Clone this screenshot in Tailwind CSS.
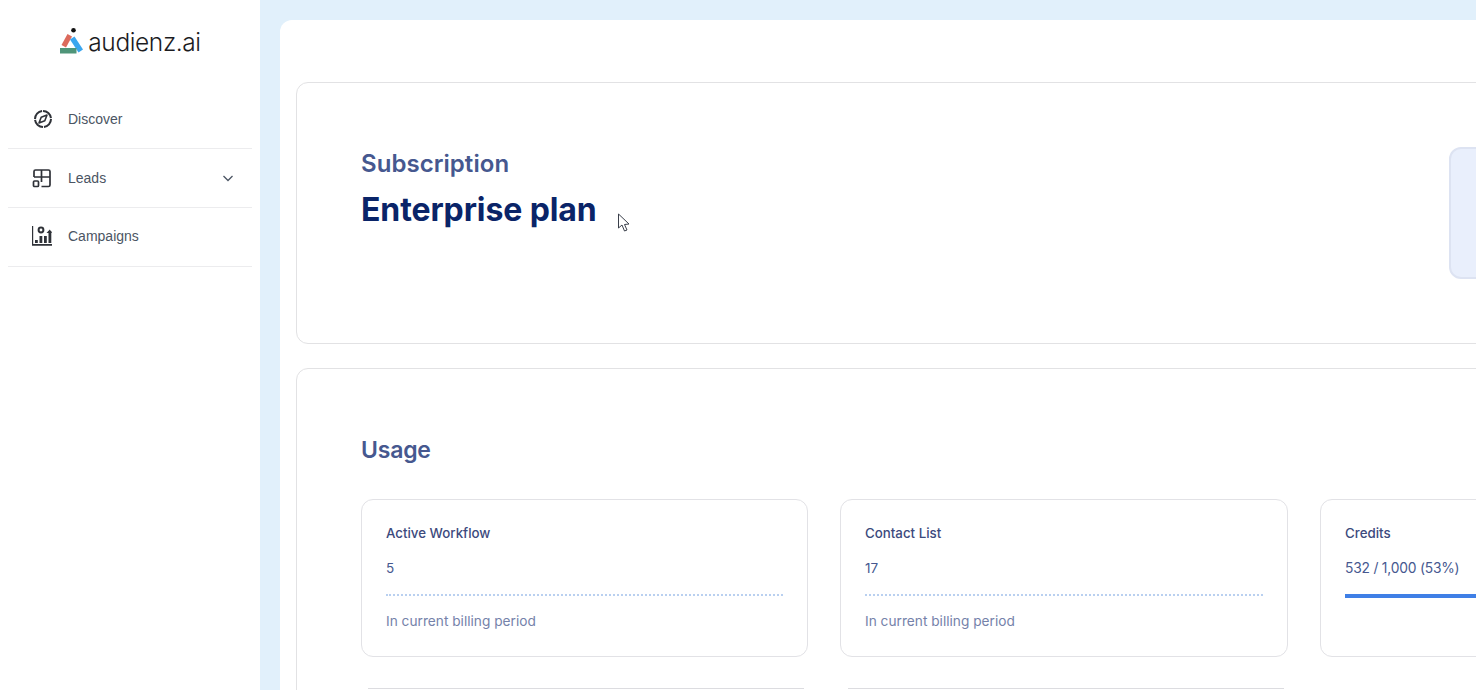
<!DOCTYPE html>
<html lang="en">
<head>
    <meta charset="UTF-8">
    <title>Subscription</title>
    <script src="https://cdn.jsdelivr.net/npm/@tailwindcss/browser@4"></script>
</head>
<body class="h-[690px] w-[1476px] overflow-hidden bg-[#e1f0fb]">
    <div class="flex h-[690px] w-[1476px] overflow-hidden">

        <!-- sidebar -->
        <aside class="w-[260px] shrink-0 bg-white px-2 font-['Liberation_Sans',sans-serif] text-sm text-[#4b5563]">
            <div class="flex h-[89px] items-start justify-center gap-[5px] pt-[27px] pl-[1px]">
                <svg class="mt-[1px] h-[26px] w-[23px]" viewBox="0 0 23 26">
                    <circle cx="13.500" cy="2.300" r="2.300" fill="#111"/>
                    <path d="M1.500 17L7.500 6L12 8.500L6 19.500Z" fill="#dc6a5c"/>
                    <path d="M10 11.500L14.500 8.500L23 21.500L18.500 24.500Z" fill="#3ba6ee"/>
                    <rect x="0" y="20" width="16.500" height="5.500" fill="#4f9579"/>
                </svg>
                <span class="font-['Inter',sans-serif] text-[24.500px] leading-[30px] font-light tracking-[-0.4px] text-[#1c1c1f]">audienz.ai</span>
            </div>

            <nav>
                <a class="flex h-[60px] items-center gap-[15px] border-b border-[#ececee] pl-[25px]">
                    <svg class="h-5 w-5" viewBox="0 0 20 20" fill="none" stroke="#2f3238" stroke-width="2">
                        <circle cx="10" cy="10" r="8" stroke-dasharray="11.500 1"/>
                        <path d="M14 6L11.800 11.800L6 14L8.200 8.200Z" stroke-width="1.600" stroke-linejoin="round"/>
                    </svg>
                    <span>Discover</span>
                </a>
                <a class="flex h-[59px] items-center gap-[16px] border-b border-[#ececee] pl-[24px] pr-[18px]">
                    <svg class="h-5 w-5" viewBox="0 0 20 20" fill="none" stroke="#2f3238" stroke-width="1.700">
                        <path d="M2 9V3.500A1.500 1.500 0 0 1 3.500 2H16.500A1.500 1.500 0 0 1 18 3.500V17A1.500 1.500 0 0 1 16.500 18.500H9.500"/>
                        <path d="M2 9H18M9.500 2V14"/>
                        <rect x="1.500" y="13" width="5" height="5.500" rx="1"/>
                    </svg>
                    <span class="flex-1">Leads</span>
                    <svg class="h-3 w-3" viewBox="0 0 12 12" fill="none" stroke="#4b5563" stroke-width="1.300"><path d="M1.500 4L6 8.500L10.500 4"/></svg>
                </a>
                <a class="flex h-[59px] items-center gap-[16px] border-b border-[#ececee] pb-[2px] pl-[24px]">
                    <svg class="h-5 w-5" viewBox="0 0 20 20" fill="#2f3238">
                        <path d="M0 0H1.200V18H20V19.800H0Z"/>
                        <rect x="3" y="14" width="2.800" height="3"/>
                        <rect x="7.500" y="10" width="2.800" height="7"/>
                        <rect x="12" y="10" width="2.800" height="7"/>
                        <rect x="16.500" y="5" width="2.800" height="12"/>
                        <path d="M14.500 7L17.800 3.500L20 7Z"/>
                        <circle cx="9" cy="4" r="2.400" fill="none" stroke="#2f3238" stroke-width="2"/>
                    </svg>
                    <span>Campaigns</span>
                </a>
            </nav>
        </aside>

        <!-- main -->
        <main class="min-w-0 flex-1 pt-5 pl-5">
            <div class="h-[800px] w-[1400px] rounded-tl-xl bg-white pt-[62px] pl-4 font-['Inter',sans-serif]">

                <section class="relative flex h-[262px] w-[1380px] flex-col rounded-l-xl border border-[#e2e2e4] pl-[64px] pt-[66px]">
                    <h2 class="text-[24px] leading-[30px] font-semibold tracking-[0.05px] text-[#46588f]">Subscription</h2>
                    <h1 class="mt-[10px] text-[32px] leading-[42px] font-bold tracking-[-0.1px] text-[#0a2468]">Enterprise plan</h1>
                    <div class="absolute top-[64px] left-[1152px] h-[132px] w-[200px] rounded-xl border-2 border-[#dde3f2] bg-[#e9effc]"></div>
                </section>

                <section class="mt-[24px] w-[1380px] rounded-l-xl border border-[#e2e2e4] pl-[64px] pt-[64px]">
                    <h2 class="text-[23px] leading-[34px] font-semibold tracking-[-0.2px] text-[#46588f]">Usage</h2>
                    <div class="mt-[32px] flex gap-[32px]">
                        <div class="h-[158px] w-[447px] shrink-0 rounded-xl border border-[#e2e2e6] pl-6 pr-6 pt-[23px]">
                            <div class="text-[13.300px] leading-[20px] font-medium text-[#3c4a7d]">Active Workflow</div>
                            <div class="mt-[15px] text-[13.500px] leading-[20px] text-[#46588f]">5</div>
                            <div class="mt-[16px] border-t-2 border-dotted border-[#b9d0f0]"></div>
                            <div class="mt-[15px] text-[13.700px] leading-[20px] text-[#7582aa]">In current billing period</div>
                        </div>
                        <div class="h-[158px] w-[448px] shrink-0 rounded-xl border border-[#e2e2e6] pl-6 pr-6 pt-[23px]">
                            <div class="text-[13.300px] leading-[20px] font-medium text-[#3c4a7d]">Contact List</div>
                            <div class="mt-[15px] text-[13.500px] leading-[20px] text-[#46588f]">17</div>
                            <div class="mt-[16px] border-t-2 border-dotted border-[#b9d0f0]"></div>
                            <div class="mt-[15px] text-[13.700px] leading-[20px] text-[#7582aa]">In current billing period</div>
                        </div>
                        <div class="h-[158px] w-[447px] shrink-0 rounded-xl border border-[#e2e2e6] pl-6 pt-[23px]">
                            <div class="text-[13.300px] leading-[20px] font-medium text-[#3c4a7d]">Credits</div>
                            <div class="mt-[15px] text-[13.800px] leading-[20px] tracking-[-0.2px] text-[#46588f]">532 / 1,000 (53%)</div>
                            <div class="mt-[16px] h-1 w-[400px] bg-[#3f7fe6]"></div>
                        </div>
                    </div>
                    <div class="mt-[31px] flex gap-[44px] pl-[7px]">
                        <div class="h-10 w-[436px] border-t border-[#dcdce0]"></div>
                        <div class="h-10 w-[436px] border-t border-[#dcdce0]"></div>
                    </div>
                </section>
            </div>
        </main>
    </div>

    <!-- mouse pointer captured in the screenshot -->
    <svg class="absolute top-[213px] left-[617px] h-5 w-[14px]" viewBox="0 0 14 20" fill="white" stroke="#3a3f4a" stroke-width="1"><path d="M1.500 1V15L5 12L7.500 18L10 17L7.500 11.500L12 11Z"/></svg>
</body>
</html>
